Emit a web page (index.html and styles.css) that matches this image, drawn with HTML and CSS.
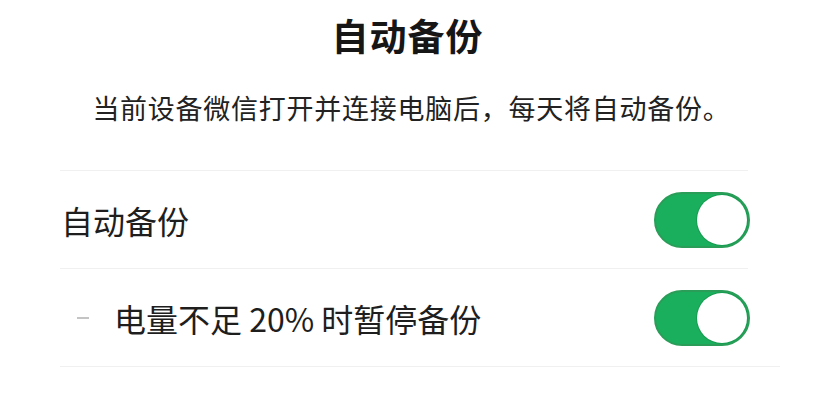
FILE: index.html
```html
<!DOCTYPE html>
<html lang="zh-CN">
<head>
<meta charset="utf-8">
<title>自动备份</title>
<link rel="stylesheet" href="styles.css">
</head>
<body>
  <main class="page">
    <header class="intro">
      <h1 class="title">自动备份</h1>
      <p class="desc">当前设备微信打开并连接电脑后，每天将自动备份。</p>
    </header>
    <ul class="settings">
      <li class="row">
        <span class="label">自动备份</span>
        <span class="switch is-on" role="switch" aria-checked="true"><span class="knob"></span></span>
      </li>
      <li class="row row-sub">
        <span class="label"><span class="dash"></span>电量不足 20% 时暂停备份</span>
        <span class="switch is-on" role="switch" aria-checked="true"><span class="knob"></span></span>
      </li>
    </ul>
  </main>
</body>
</html>
```

FILE: styles.css
```css
* { box-sizing: border-box; }

html, body {
  margin: 0;
  padding: 0;
  background: #ffffff;
}

body {
  font-family: "Noto Sans CJK SC", "Noto Sans", sans-serif;
  color: #1c1c1c;
}

.page {
  width: 815px;
  height: 400px;
  overflow: hidden;
}

.intro {
  text-align: center;
  padding-top: 9px;
}

.title {
  margin: 0;
  font-size: 37px;
  line-height: 52px;
  font-weight: 700;
  letter-spacing: 1px;
  color: #161616;
}

.desc {
  margin: 27px 0 0;
  padding-left: 8px;
  font-size: 27px;
  line-height: 40px;
  color: #222222;
  letter-spacing: 0.75px;
}

.settings {
  list-style: none;
  margin: 42px 0 0 60px;
  padding: 0;
  width: 688px;
  border-top: 1px solid #f0f0f0;
}

.row {
  height: 98px;
  display: flex;
  align-items: center;
  justify-content: space-between;
  border-bottom: 1px solid #f0f0f0;
  padding-left: 1px;
  padding-right: 0;
}

.row:last-child {
  margin-right: -32px;
  padding-right: 32px;
}

.label {
  font-size: 32px;
  line-height: 40px;
  color: #1e1e1e;
  display: flex;
  align-items: center;
}

.row-sub .label {
  padding-left: 16px;
}

.dash {
  width: 12px;
  height: 2px;
  background: #c4c4c4;
  margin-right: 25px;
}

.switch {
  position: relative;
  width: 96px;
  height: 56px;
  margin-right: -2px;
  border-radius: 28px;
  background: #1aaf5d;
  border: 2px solid #2a9d58;
  flex: none;
}

.switch .knob {
  position: absolute;
  top: 1px;
  right: 1px;
  width: 50px;
  height: 50px;
  border-radius: 50%;
  background: #ffffff;
  box-shadow: 0 0 0 1px rgba(20, 120, 60, 0.35);
}
```
